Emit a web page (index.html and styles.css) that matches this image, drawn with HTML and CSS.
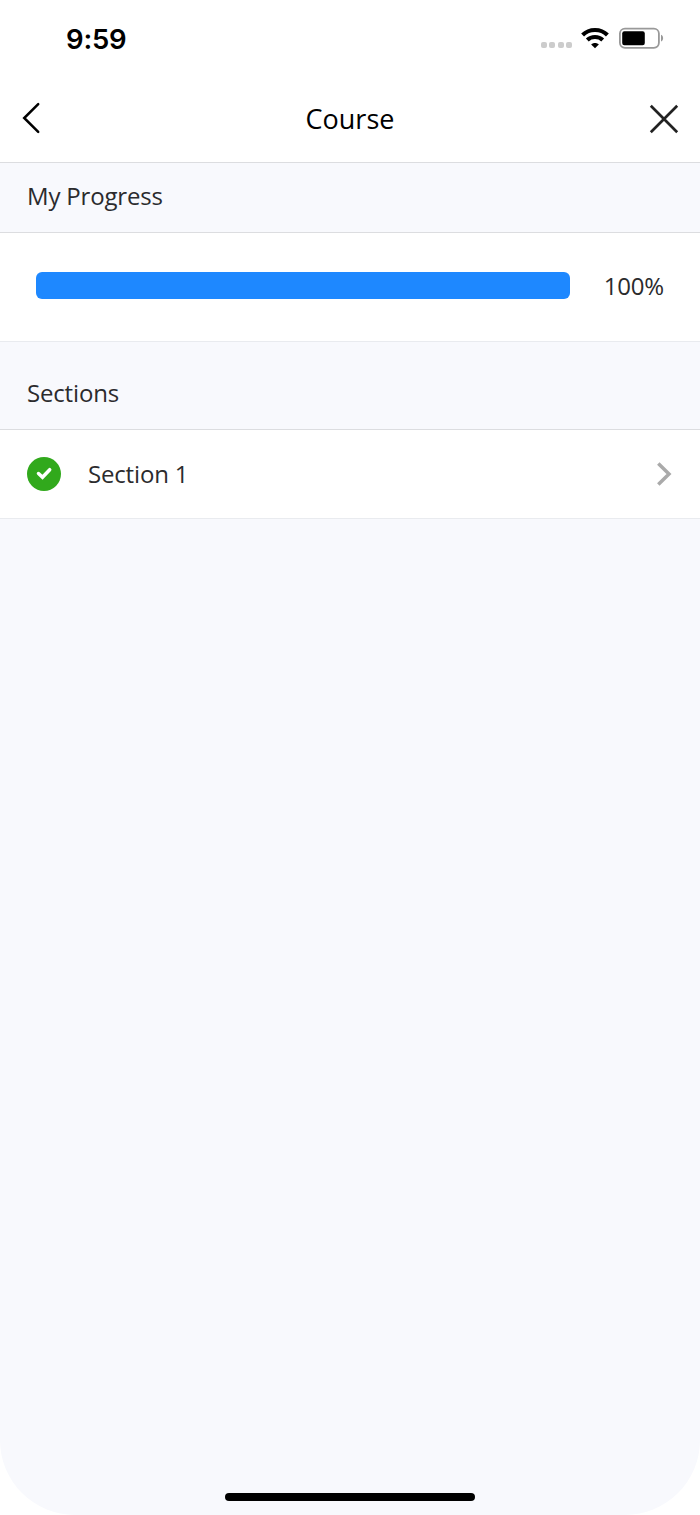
FILE: index.html
```html
<!DOCTYPE html>
<html lang="en">
  <head>
    <meta charset="UTF-8" />
    <meta name="viewport" content="width=device-width, initial-scale=1.0" />
    <title>Course</title>
    <link rel="stylesheet" href="styles.css">
  </head>
  <body>
    <div class="screen">
      <div class="status-bar">
        <span class="time">9:59</span>
        <div class="status-icons">
          <div class="signal"><i></i><i></i><i></i><i></i></div>
          <svg class="wifi" width="28" height="22" viewBox="0 0 28 22">
            <g fill="none" stroke="#000" stroke-width="4">
              <path d="M1.6 8 C8.2 1.2 19.8 1.2 26.4 8" />
              <path d="M6.3 13 C10.3 9 17.7 9 21.7 13" />
            </g>
            <path d="M14 21.2 L10.2 17.4 C12.2 15.4 15.8 15.4 17.8 17.4 Z" fill="#000" />
          </svg>
          <svg class="battery" width="45" height="22" viewBox="0 0 45 22">
            <rect x="0.9" y="1.6" width="39" height="19.2" rx="5" fill="none" stroke="#999" stroke-width="1.8" />
            <rect x="3.2" y="4.2" width="22.6" height="14" rx="2.2" fill="#000" />
            <path d="M42 7.7 C44.8 8.8 44.8 13.4 42 14.5 Z" fill="#999" />
          </svg>
        </div>
      </div>

      <header class="nav">
        <button class="nav-button" aria-label="Back">
          <svg width="20" height="32" viewBox="0 0 20 32">
            <path d="M17.2 2.2 L3.2 16 L17.2 29.8" fill="none" stroke="#000" stroke-width="2.5" stroke-linecap="round" />
          </svg>
        </button>
        <h1>Course</h1>
        <button class="nav-button" aria-label="Close">
          <svg width="30" height="32" viewBox="0 0 30 32">
            <path d="M1.8 3.8 L28.2 30.2 M28.2 3.8 L1.8 30.2" fill="none" stroke="#222" stroke-width="2.7" />
          </svg>
        </button>
      </header>

      <main>
        <h2 class="group-title">My Progress</h2>
        <div class="progress">
          <div class="progress-track">
            <div class="progress-fill" style="width: 100%"></div>
          </div>
          <span>100%</span>
        </div>

        <h2 class="group-title sections-title">Sections</h2>
        <div class="section-row">
          <svg width="34" height="34" viewBox="0 0 34 34">
            <circle cx="17" cy="17" r="17" fill="#31a91c" />
            <path d="M11.5 16.5 L15.5 20.2 L22.7 12.7" fill="none" stroke="#fff" stroke-width="3.5" stroke-linecap="round" />
          </svg>
          <span class="section-name">Section 1</span>
          <svg width="16" height="26" viewBox="0 0 16 26">
            <path d="M1.3 2.4 L12 13 L1.3 23.6" fill="none" stroke="#aaa" stroke-width="3.5" />
          </svg>
        </div>
      </main>

      <footer class="home-area">
        <div class="home-indicator"></div>
      </footer>
    </div>
  </body>
</html>
```

FILE: styles.css
```css
:root {
  --background-color: #f8f9fd;
  --line-color: #dcdde0;
  --light-line-color: #e9ebef;
  --font-color: #2b2b2d;
  --progress-color: #1e88ff;
}

* {
  box-sizing: border-box;
}

body {
  margin: 0;
  background-color: #fff;
  font-family: "Open Sans", sans-serif;
  font-size: 24px;
  letter-spacing: -0.17px;
  color: var(--font-color);
}

.screen {
  display: flex;
  flex-direction: column;
  height: 1515px;
  background-color: var(--background-color);
  border-radius: 0 0 75px 75px;
  overflow: hidden;
}

.status-bar {
  display: flex;
  justify-content: space-between;
  align-items: center;
  height: 76px;
  padding: 0 36px 0 66px;
  background-color: #fff;
}

.time {
  padding-top: 2px;
  font-family: Inter, sans-serif;
  font-size: 27.5px;
  font-weight: 600;
  line-height: 34px;
  letter-spacing: -0.2px;
  color: #000;
}

.status-icons {
  display: flex;
  align-items: center;
}

.signal {
  display: flex;
  gap: 2.4px;
  margin: 14px 9px 0 0;
}

.signal i {
  width: 6px;
  height: 6px;
  border-radius: 2px;
  background-color: #ccc;
}

.battery {
  margin-left: 10px;
}

.nav {
  display: flex;
  justify-content: space-between;
  align-items: center;
  height: 87px;
  padding: 0 21px 2px;
  background-color: #fff;
  border-bottom: 1px solid var(--line-color);
}

.nav-button {
  display: flex;
  align-items: center;
  width: 30px;
  padding: 0;
  border: none;
  background: none;
  cursor: pointer;
}

.nav h1 {
  margin: 0;
  font-size: 27px;
  font-weight: 400;
  letter-spacing: 0;
  color: #000;
}

.group-title {
  height: 70px;
  margin: 0;
  padding: 16px 27px 0;
  border-bottom: 1px solid var(--line-color);
  font-size: 24px;
  font-weight: 400;
  line-height: 34px;
}

.sections-title {
  height: 88px;
  padding-top: 34px;
}

.progress {
  display: flex;
  justify-content: space-between;
  align-items: center;
  height: 109px;
  padding: 0 36px 4px;
  background-color: #fff;
  border-bottom: 1px solid var(--light-line-color);
}

.progress-track {
  width: 534px;
  height: 27px;
}

.progress-fill {
  height: 100%;
  border-radius: 6px;
  background-color: var(--progress-color);
}

.section-row {
  display: flex;
  align-items: center;
  height: 89px;
  padding: 0 27px;
  background-color: #fff;
  border-bottom: 1px solid var(--light-line-color);
}

.section-name {
  flex: 1;
  margin-left: 27px;
  padding-bottom: 2px;
}

.home-area {
  display: flex;
  justify-content: center;
  margin-top: auto;
  padding-bottom: 14px;
}

.home-indicator {
  width: 250px;
  height: 8px;
  border-radius: 4px;
  background-color: #000;
}
```
